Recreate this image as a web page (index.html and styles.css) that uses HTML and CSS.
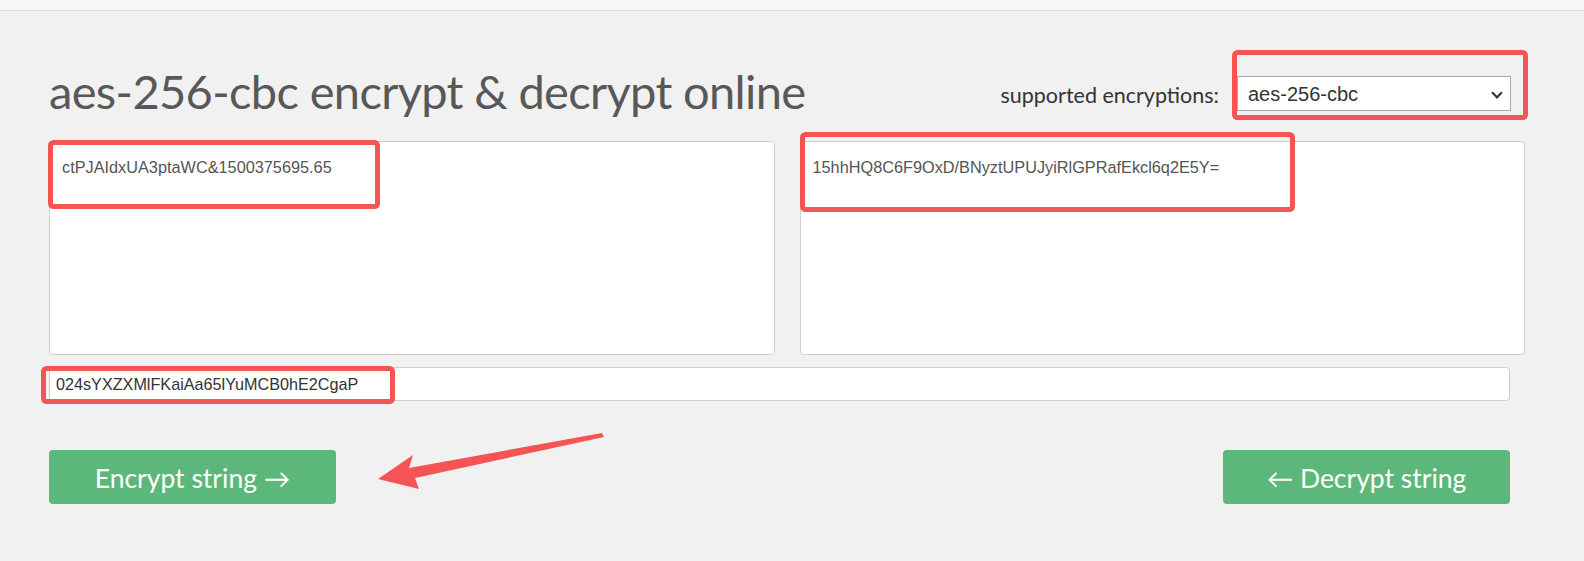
FILE: index.html
```html
<!DOCTYPE html>
<html lang="en">
<head>
<meta charset="utf-8">
<title>aes-256-cbc encrypt &amp; decrypt online</title>
<link rel="stylesheet" href="styles.css">
</head>
<body>
<div class="topbar"></div>
<main class="container">
  <header class="header">
    <h1 class="title">aes-256-cbc encrypt &amp; decrypt online</h1>
    <div class="picker">
      <label class="picker-label" for="method">supported encryptions:</label>
      <div class="select-wrap">
        <select id="method" class="select">
          <option>aes-256-cbc</option>
        </select>
      </div>
    </div>
  </header>
  <section class="panes">
    <textarea class="pane">ctPJAIdxUA3ptaWC&amp;1500375695.65</textarea>
    <textarea class="pane">15hhHQ8C6F9OxD/BNyztUPUJyiRlGPRafEkcl6q2E5Y=</textarea>
  </section>
  <input class="key" type="text" value="024sYXZXMlFKaiAa65lYuMCB0hE2CgaP">
  <div class="actions">
    <button class="btn">Encrypt string →</button>
    <button class="btn">← Decrypt string</button>
  </div>
</main>
<svg class="marks" width="1584" height="561" viewBox="0 0 1584 561" aria-hidden="true">
  <rect x="1234.5" y="52.5" width="291" height="65" rx="3"/>
  <rect x="50.5" y="142.5" width="327" height="64" rx="3"/>
  <rect x="802.5" y="134.5" width="490" height="75" rx="3"/>
  <rect x="43.5" y="368.5" width="349" height="33" rx="3"/>
  <polygon class="arrow" points="378,479 413,455 409,468 602,433 604,437 415,478 419,489"/>
</svg>
</body>
</html>
```
FILE: styles.css
```css
* { box-sizing: border-box; }

html, body {
  margin: 0;
  padding: 0;
}

body {
  position: relative;
  width: 1584px;
  height: 561px;
  overflow: hidden;
  background: #f1f1f1;
  font-family: "Lato", "Open Sans", sans-serif;
}

.topbar {
  height: 11px;
  background: #f6f6f6;
  border-bottom: 1px solid #dedede;
}

.container {
  width: 1476px;
  margin-left: 49px;
}

.header {
  display: flex;
  justify-content: space-between;
  align-items: flex-end;
  padding-right: 14px;
  height: 100px;
}

.title {
  margin: 0 0 -4px 0;
  font-family: "Lato", sans-serif;
  font-weight: 400;
  font-size: 47px;
  line-height: 1;
  color: #585858;
  letter-spacing: -0.65px;
}

.picker {
  display: flex;
  align-items: flex-end;
  gap: 18px;
}

.picker-label {
  font-size: 21.5px;
  line-height: 1;
  color: #333;
  margin-bottom: 5px;
}

.select-wrap {
  position: relative;
}

.select-wrap::after {
  content: "";
  position: absolute;
  right: 10px;
  top: 13px;
  width: 6px;
  height: 6px;
  border-right: 2px solid #333;
  border-bottom: 2px solid #333;
  transform: rotate(45deg);
  pointer-events: none;
}

.select {
  display: block;
  appearance: none;
  -webkit-appearance: none;
  width: 274px;
  height: 35px;
  padding: 0 0 0 10px;
  border: 1px solid #a9a9a9;
  border-radius: 0;
  background: #fff;
  font-family: "Liberation Sans", Arial, sans-serif;
  font-size: 20px;
  color: #333;
}

.panes {
  display: grid;
  grid-template-columns: 1fr 1fr;
  gap: 25px;
  margin-top: 30px;
}

.pane {
  display: block;
  height: 214px;
  resize: none;
  padding: 14px 12px 12px;
  border: 1px solid #cfcfcf;
  border-radius: 4px;
  background: #fff;
  font-family: "Liberation Sans", Arial, sans-serif;
  font-size: 16.3px;
  line-height: 1.42857;
  color: #555;
}

.key {
  display: block;
  width: 1461px;
  height: 34px;
  margin-top: 12px;
  padding: 0 6px;
  border: 1px solid #cfcfcf;
  border-radius: 4px;
  background: #fff;
  font-family: "Liberation Sans", Arial, sans-serif;
  font-size: 16.2px;
  color: #333;
}

.actions {
  display: flex;
  justify-content: space-between;
  width: 1461px;
  margin-top: 49px;
}

.btn {
  width: 287px;
  height: 54px;
  border: 0;
  border-radius: 4px;
  background: #5cb87a;
  color: #fff;
  font-family: "Lato", sans-serif;
  font-size: 26.5px;
  line-height: 1;
  padding: 2px 0 0;
}

.marks {
  position: absolute;
  left: 0;
  top: 0;
  pointer-events: none;
}

.marks rect {
  fill: none;
  stroke: #f45454;
  stroke-width: 5;
}

.marks .arrow {
  fill: #f45454;
  stroke: none;
}
```
